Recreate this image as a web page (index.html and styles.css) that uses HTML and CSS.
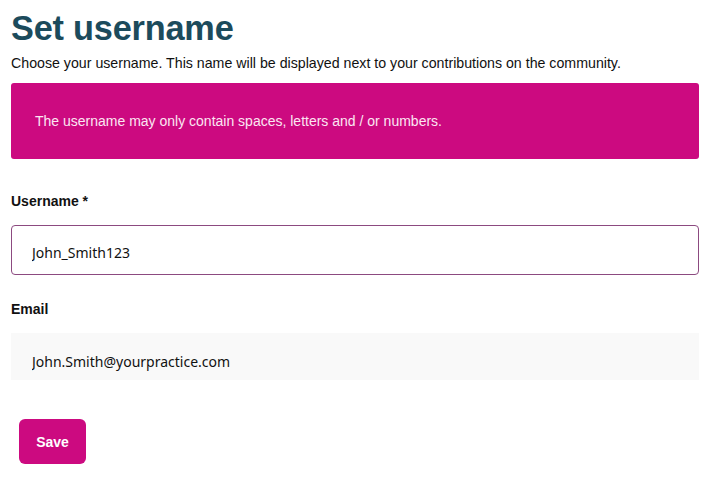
FILE: index.html
```html
<!DOCTYPE html>
<html lang="en">
<head>
  <meta charset="UTF-8">
  <meta name="viewport" content="width=device-width, initial-scale=1.0">
  <title>Set username</title>
  <link rel="stylesheet" href="styles.css">
</head>
<body>
  <div class="page">
    <h1 class="title">Set username</h1>
    <p class="intro">Choose your username. This name will be displayed next to your contributions on the community.</p>

    <div class="notice">The username may only contain spaces, letters and / or numbers.</div>

    <form class="form">
      <label class="label" for="username">Username *</label>
      <input class="field" type="text" id="username" value="John_Smith123">

      <label class="label label-email" for="email">Email</label>
      <input class="field field-readonly" type="text" id="email" value="John.Smith@yourpractice.com" readonly>

      <button class="save" type="button">Save</button>
    </form>
  </div>
</body>
</html>
```

FILE: styles.css
```css
body {
  margin: 0;
  background: #fff;
  font-family: "Liberation Sans", Arial, sans-serif;
  color: #111;
}

.page {
  padding: 8px 10px 0 11px;
}

.title {
  margin: 0;
  font-size: 34.3px;
  line-height: 40px;
  font-weight: bold;
  color: #1c4b5c;
  letter-spacing: -0.2px;
}

.intro {
  margin: 7px 0 0;
  font-size: 14.2px;
  line-height: 17px;
}

.notice {
  margin-top: 11px;
  height: 76px;
  box-sizing: border-box;
  padding: 0 24px;
  display: flex;
  align-items: center;
  background-color: #cc0a80;
  color: #fbe6f2;
  font-size: 14px;
  border-radius: 3px;
}

.form {
  display: flex;
  flex-direction: column;
  align-items: flex-start;
}

.label {
  margin-top: 34px;
  font-size: 14px;
  font-weight: bold;
  line-height: 16px;
}

.label-email {
  margin-top: 26px;
}

.field {
  width: 100%;
  height: 50px;
  margin: 16px 0 0;
  box-sizing: border-box;
  padding: 4px 20px 0;
  border: 1px solid #8c4a80;
  border-radius: 4px;
  font-family: "Noto Sans", "Open Sans", sans-serif;
  font-size: 14px;
  color: #111;
  background: #fff;
}

.field-readonly {
  height: 47px;
  border: none;
  border-radius: 0;
  background: #f9f9f9;
  padding: 10px 20px 0 21px;
}

.save {
  margin: 39px 0 0 8px;
  width: 67px;
  height: 45px;
  background-color: #cc0a80;
  color: #fff;
  border: none;
  border-radius: 6px;
  font-family: "Liberation Sans", Arial, sans-serif;
  font-size: 14px;
  font-weight: bold;
  cursor: pointer;
}
```
